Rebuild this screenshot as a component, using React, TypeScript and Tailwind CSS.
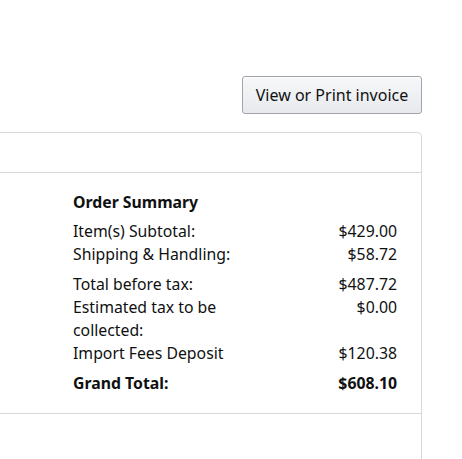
const rows = [
  [
    { label: 'Item(s) Subtotal:', value: '$429.00' },
    { label: 'Shipping & Handling:', value: '$58.72' },
  ],
  [
    { label: 'Total before tax:', value: '$487.72' },
    { label: 'Estimated tax to be collected:', value: '$0.00' },
    { label: 'Import Fees Deposit', value: '$120.38' },
  ],
];

function Row({ label, value, bold }: { label: string; value: string; bold?: boolean }) {
  return (
    <div className={`flex justify-between ${bold ? 'font-bold' : ''}`}>
      <span className="w-[190px]">{label}</span>
      <span className="text-right">{value}</span>
    </div>
  );
}

export default function App() {
  return (
    <div className="w-full h-[459px] bg-white overflow-hidden text-[#0f1111] font-['Noto_Sans',sans-serif] text-[15.8px] leading-[23px]">
      <div className="flex justify-end pr-[40px] pt-[76px]">
        <button className="h-[38px] w-[180px] rounded-[3px] border border-[#a2a6ac] bg-gradient-to-b from-[#f7f8fa] to-[#e7e9ec] text-[#111] text-[16px] shadow-[0_1px_0_rgba(255,255,255,0.6)_inset]">
          View or Print invoice
        </button>
      </div>

      <div className="mt-[18px] mr-[40px] h-[400px] border-t border-r border-[#d5d9d9] rounded-tr-[5px]">
        <div className="h-[40px] border-b border-[#d5d9d9]"></div>
        <div className="pl-[73px] pr-[24px] pt-[18px] pb-[18px] border-b border-[#d5d9d9]">
          <div className="font-bold">Order Summary</div>
          <div className="mt-[6px]">
            {rows[0].map((r) => (
              <Row key={r.label} {...r} />
            ))}
          </div>
          <div className="mt-[7px]">
            {rows[1].map((r) => (
              <Row key={r.label} {...r} />
            ))}
          </div>
          <div className="mt-[7px]">
            <Row label="Grand Total:" value="$608.10" bold />
          </div>
        </div>
      </div>
    </div>
  );
}
